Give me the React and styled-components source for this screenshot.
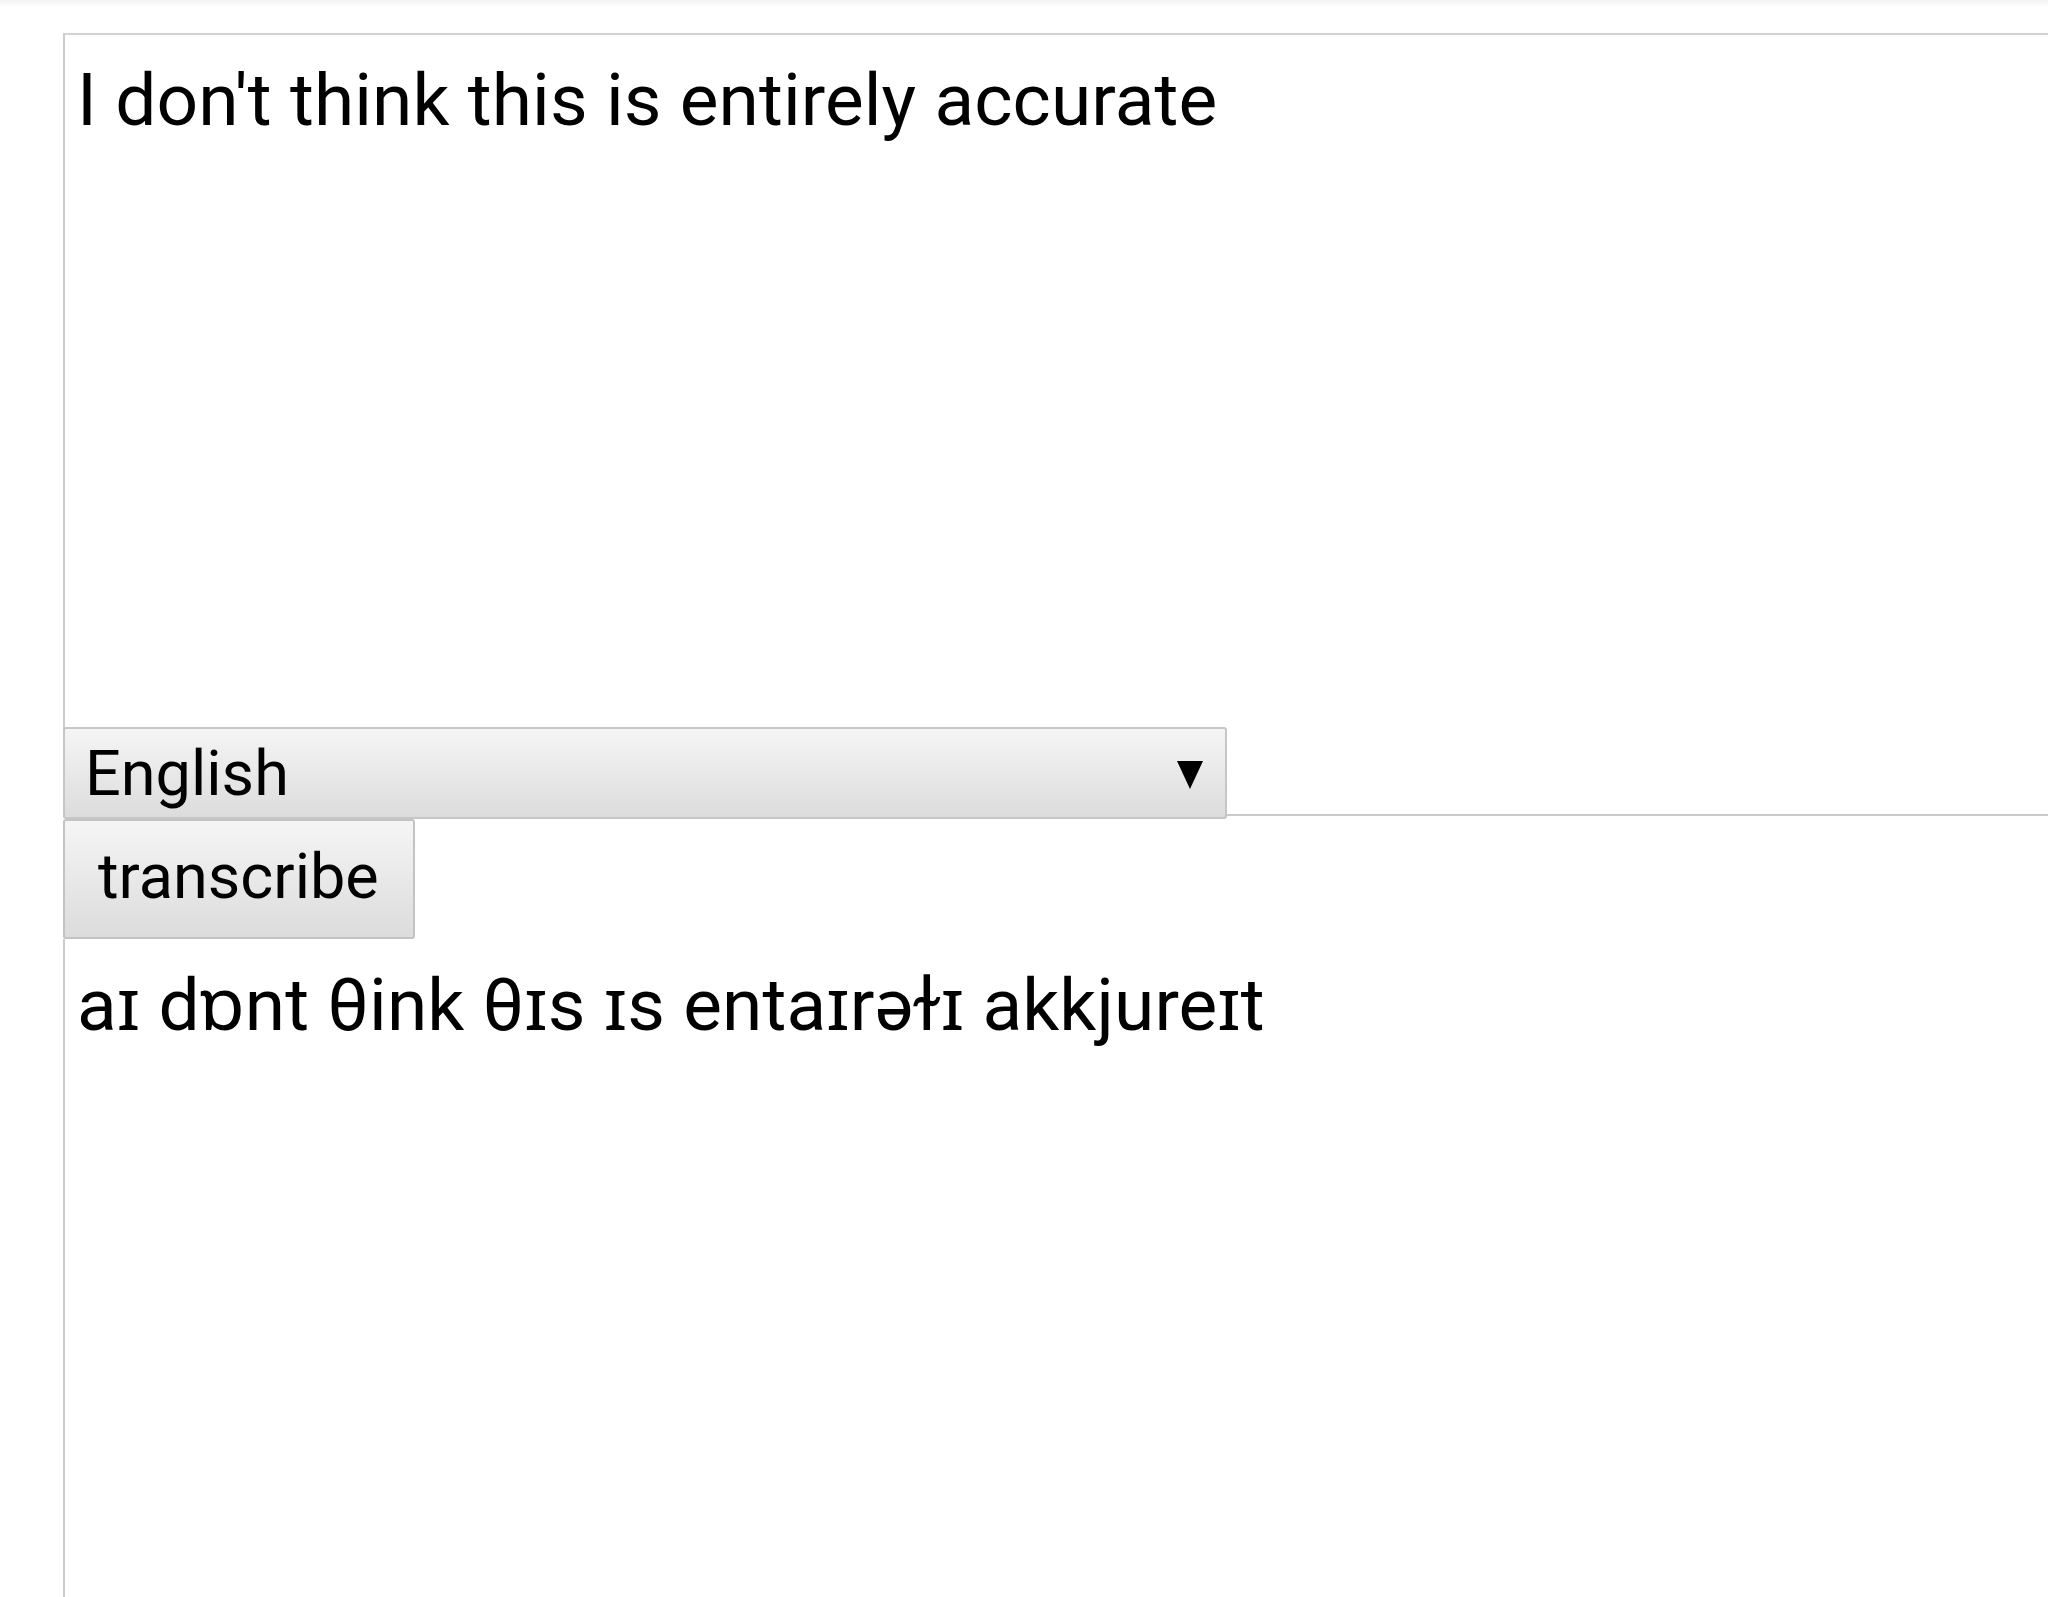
import React from 'react';
import styled, { createGlobalStyle } from 'styled-components';

const GlobalStyle = createGlobalStyle`
  html, body {
    margin: 0;
    padding: 0;
    background: #ffffff;
    overflow: hidden;
  }
  body {
    font-family: Roboto, "Noto Sans", "DejaVu Sans", sans-serif;
    color: #000;
  }
`;

const Page = styled.div`
  height: 100vh;
  overflow: hidden;
  display: flex;
  flex-direction: column;
`;

const TopShade = styled.div`
  height: 7px;
  flex: none;
  background: linear-gradient(#f2f2f2, #fbfbfb 70%, #ffffff);
`;

const Form = styled.div`
  display: flex;
  flex-direction: column;
  padding: 26px 0 0 63px;
  width: 2120px;
`;

const InputStack = styled.div`
  display: grid;
  grid-template-areas: 'cell';
`;

const TextBox = styled.div`
  grid-area: cell;
  box-sizing: border-box;
  width: 100%;
  height: ${props => props.height}px;
  padding: ${props => props.padTop}px 12px 0 12px;
  border: 2px solid #cbcbcb;
  border-top: ${props => props.noTop ? 'none' : '2px solid #d2d2d2'};
  font-size: 73px;
  letter-spacing: 0.1px;
  line-height: normal;
  white-space: pre-wrap;
  background: #fff;
`;

const SelectBox = styled.div`
  grid-area: cell;
  align-self: end;
  box-sizing: border-box;
  width: 1164px;
  height: 92px;
  margin-bottom: -3px;
  display: flex;
  align-items: center;
  justify-content: space-between;
  padding: 0 22px 0 20px;
  border: 2px solid #c6c6c6;
  border-radius: 3px;
  background: linear-gradient(#f5f5f5, #dcdcdc);
  font-size: 63px;
  line-height: 1;

  svg {
    width: 26px;
    height: 28px;
    margin-top: 4px;
  }
`;

const Button = styled.button`
  align-self: flex-start;
  box-sizing: border-box;
  height: 120px;
  margin: 3px 0 0 0;
  padding: 0 34px 6px 33px;
  border: 2px solid #c3c3c3;
  border-radius: 3px;
  background: linear-gradient(#f5f5f5, #dcdcdc);
  font-family: Roboto, "Noto Sans", sans-serif;
  font-size: 63px;
  color: #000;
`;

const App = () => {
  return (
    <Page>
      <GlobalStyle />
      <TopShade />
      <Form>
        <InputStack>
          <TextBox height={783} padTop={22}>I don't think this is entirely accurate</TextBox>
          <SelectBox>
            <span>English</span>
            <svg viewBox="0 0 26 28">
              <path d="M0 0H26L13 28Z" fill="#000" />
            </svg>
          </SelectBox>
        </InputStack>
        <Button>transcribe</Button>
        <TextBox height={760} padTop={13} noTop>aɪ dɒnt θink θɪs ɪs entaɪrəɫɪ akkjureɪt</TextBox>
      </Form>
    </Page>
  );
};

export default App;
